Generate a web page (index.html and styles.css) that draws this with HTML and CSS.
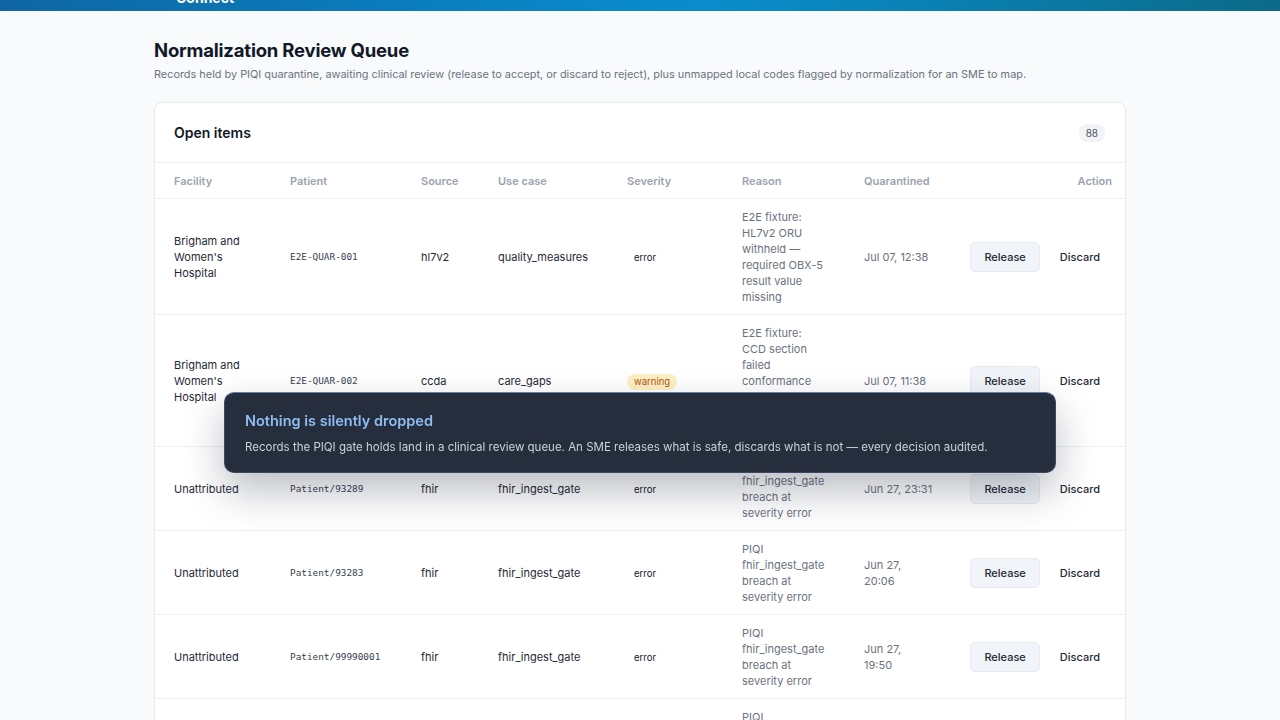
FILE: index.html
```html
<!DOCTYPE html>
<html lang="en">
<head>
    <meta charset="UTF-8">
    <meta name="viewport" content="width=device-width, initial-scale=1.0">
    <title>Normalization Review Queue</title>
    <link rel="stylesheet" href="styles.css">
</head>
<body>

    <header class="topbar">
        <div class="brand">Connect</div>
    </header>

    <main class="page">
        <h1>Normalization Review Queue</h1>
        <p class="subtitle">Records held by PIQI quarantine, awaiting clinical review (release to accept, or discard to reject), plus unmapped local codes flagged by normalization for an SME to map.</p>

        <section class="card">
            <div class="card-head">
                <h2>Open items</h2>
                <span class="count">88</span>
            </div>

            <table class="queue">
                <colgroup>
                    <col class="c-facility">
                    <col class="c-patient">
                    <col class="c-source">
                    <col class="c-usecase">
                    <col class="c-severity">
                    <col class="c-reason">
                    <col class="c-date">
                    <col class="c-action">
                </colgroup>
                <thead>
                    <tr>
                        <th>Facility</th>
                        <th>Patient</th>
                        <th>Source</th>
                        <th>Use case</th>
                        <th>Severity</th>
                        <th>Reason</th>
                        <th>Quarantined</th>
                        <th class="right">Action</th>
                    </tr>
                </thead>
                <tbody>
                    <tr>
                        <td class="facility">Brigham and Women's Hospital</td>
                        <td class="mono">E2E-QUAR-001</td>
                        <td>hl7v2</td>
                        <td>quality_measures</td>
                        <td><span class="sev sev-error">error</span></td>
                        <td class="reason">E2E fixture: HL7v2 ORU withheld — required OBX-5 result value missing</td>
                        <td class="muted">Jul 07, 12:38</td>
                        <td><div class="actions"><button class="btn-release">Release</button><button class="btn-discard">Discard</button></div></td>
                    </tr>
                    <tr>
                        <td class="facility">Brigham and Women's Hospital</td>
                        <td class="mono">E2E-QUAR-002</td>
                        <td>ccda</td>
                        <td>care_gaps</td>
                        <td><span class="sev sev-warning">warning</span></td>
                        <td class="reason">E2E fixture: CCD section failed conformance — Problems section entry missing</td>
                        <td class="muted">Jul 07, 11:38</td>
                        <td><div class="actions"><button class="btn-release">Release</button><button class="btn-discard">Discard</button></div></td>
                    </tr>
                    <tr>
                        <td class="facility">Unattributed</td>
                        <td class="mono">Patient/93289</td>
                        <td>fhir</td>
                        <td>fhir_ingest_gate</td>
                        <td><span class="sev sev-error">error</span></td>
                        <td class="reason">PIQI fhir_ingest_gate breach at severity error</td>
                        <td class="muted">Jun 27, 23:31</td>
                        <td><div class="actions"><button class="btn-release">Release</button><button class="btn-discard">Discard</button></div></td>
                    </tr>
                    <tr>
                        <td class="facility">Unattributed</td>
                        <td class="mono">Patient/93283</td>
                        <td>fhir</td>
                        <td>fhir_ingest_gate</td>
                        <td><span class="sev sev-error">error</span></td>
                        <td class="reason">PIQI fhir_ingest_gate breach at severity error</td>
                        <td class="muted narrow">Jun 27, 20:06</td>
                        <td><div class="actions"><button class="btn-release">Release</button><button class="btn-discard">Discard</button></div></td>
                    </tr>
                    <tr>
                        <td class="facility">Unattributed</td>
                        <td class="mono">Patient/99990001</td>
                        <td>fhir</td>
                        <td>fhir_ingest_gate</td>
                        <td><span class="sev sev-error">error</span></td>
                        <td class="reason">PIQI fhir_ingest_gate breach at severity error</td>
                        <td class="muted narrow">Jun 27, 19:50</td>
                        <td><div class="actions"><button class="btn-release">Release</button><button class="btn-discard">Discard</button></div></td>
                    </tr>
                    <tr>
                        <td class="facility">Unattributed</td>
                        <td class="mono">Patient/99990002</td>
                        <td>fhir</td>
                        <td>fhir_ingest_gate</td>
                        <td><span class="sev sev-error">error</span></td>
                        <td class="reason">PIQI fhir_ingest_gate breach at severity error</td>
                        <td class="muted narrow">Jun 27, 19:48</td>
                        <td><div class="actions"><button class="btn-release">Release</button><button class="btn-discard">Discard</button></div></td>
                    </tr>
                </tbody>
            </table>
        </section>
    </main>

    <!-- onboarding tip shown over the queue -->
    <div class="toast">
        <div class="toast-title">Nothing is silently dropped</div>
        <div class="toast-body">Records the PIQI gate holds land in a clinical review queue. An SME releases what is safe, discards what is not — every decision audited.</div>
    </div>

</body>
</html>
```

FILE: styles.css
```css
body {
    font-family: Inter, "Noto Sans", sans-serif;
    margin: 0;
    background-color: #f8fafc;
    color: #1f2937;
    font-size: 11px;
}
.topbar {
    height: 11px;
    overflow: hidden;
    background: linear-gradient(90deg, #0f66a3 0%, #0a7fc0 35%, #0a8dcc 55%, #0a7fb0 75%, #0c6a88 100%);
}
.brand {
    margin: -12px 0 0 176px;
    color: #fff;
    font-weight: 700;
    font-size: 14px;
    line-height: 20px;
}
.page {
    width: 972px;
    margin: 0 auto;
    padding-top: 27px;
}
h1 {
    margin: 0;
    font-size: 18.5px;
    line-height: 24px;
    font-weight: 700;
    color: #111827;
    letter-spacing: -0.2px;
}
.subtitle {
    margin: 4px 0 0;
    font-size: 10.9px;
    line-height: 16px;
    color: #6b7280;
}
.card {
    margin-top: 20px;
    background-color: #fff;
    border: 1px solid #e8ebef;
    border-radius: 8px;
    box-shadow: 0 1px 2px rgba(15, 23, 42, 0.03);
    overflow: hidden;
}
.card-head {
    display: flex;
    align-items: center;
    justify-content: space-between;
    height: 59px;
    padding: 0 20px 0 19px;
    border-bottom: 1px solid #eef0f3;
}
.card-head h2 {
    margin: 0;
    font-size: 14px;
    font-weight: 600;
    color: #111827;
}
.count {
    background-color: #f1f3f6;
    color: #4b5563;
    font-size: 10px;
    padding: 3px 7px;
    border-radius: 8px;
}
.queue {
    width: 100%;
    border-collapse: collapse;
    table-layout: fixed;
}
.c-facility { width: 116px; }
.c-patient { width: 131px; }
.c-source { width: 77px; }
.c-usecase { width: 129px; }
.c-severity { width: 115px; }
.c-reason { width: 122px; }
.c-date { width: 107px; }
.c-action { width: 175px; }
th {
    height: 35px;
    padding: 0 0 0 19px;
    text-align: left;
    font-size: 11px;
    font-weight: 600;
    color: #9ca3af;
    border-bottom: 1px solid #eef0f3;
}
th.right {
    text-align: right;
    padding-right: 15px;
}
td {
    padding: 10px 0 9px 19px;
    vertical-align: middle;
    line-height: 16px;
    color: #1f2937;
    border-bottom: 1px solid #eef0f3;
}
td.facility {
    padding-right: 20px;
}
td.reason {
    padding-right: 20px;
    color: #6b7280;
}
td.muted {
    padding-right: 12px;
    color: #6b7280;
}
td.narrow {
    padding-right: 40px;
}
.mono {
    font-family: "DejaVu Sans Mono", monospace;
    font-size: 9.4px;
    color: #374151;
}
.sev {
    display: inline-block;
    padding: 2px 7px;
    border-radius: 8px;
    font-size: 9.5px;
    line-height: 12px;
}
.sev-error {
    color: #111827;
}
.sev-warning {
    background-color: #fdf0c4;
    color: #b45309;
}
.actions {
    display: flex;
    justify-content: flex-end;
    align-items: center;
    gap: 8px;
    padding-right: 15px;
}
button {
    font-family: inherit;
    font-size: 11px;
    font-weight: 500;
    color: #1f2937;
    border-radius: 5px;
    cursor: pointer;
}
.btn-release {
    height: 30px;
    padding: 0 13px;
    background-color: #f1f4f8;
    border: 1px solid #e6eaf0;
}
.btn-discard {
    height: 30px;
    padding: 0 12px;
    background: none;
    border: none;
}
.toast {
    position: fixed;
    top: 392px;
    left: 224px;
    width: 790px;
    padding: 18px 20px 17px;
    background-color: #262e3e;
    border: 1px solid #3b4a63;
    border-top-color: #5f7fa8;
    border-radius: 10px;
    box-shadow: 0 18px 40px rgba(15, 23, 42, 0.28);
}
.toast-title {
    color: #8fbcf0;
    font-size: 14.5px;
    font-weight: 600;
    line-height: 20px;
}
.toast-body {
    margin-top: 8px;
    color: #c9d1dc;
    font-size: 11.5px;
    line-height: 16px;
}
```
